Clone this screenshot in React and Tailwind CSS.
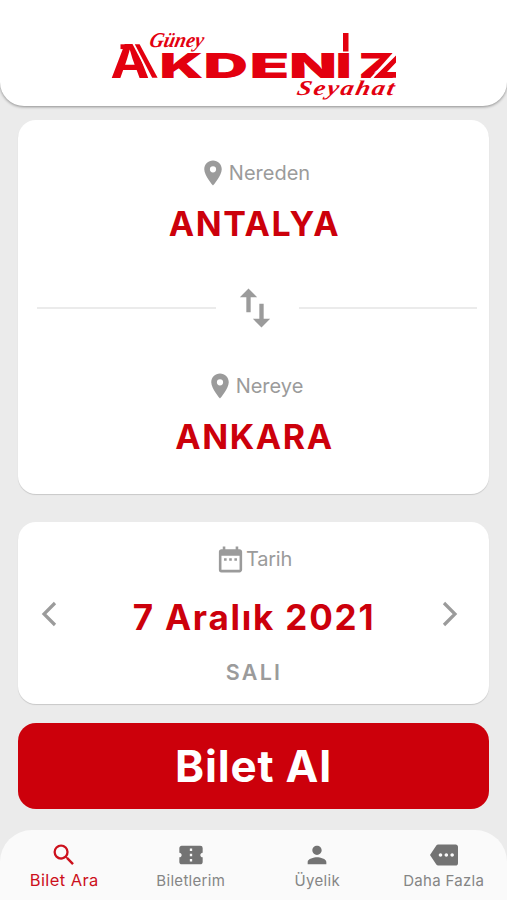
import {
  MdPlace,
  MdImportExport,
  MdDateRange,
  MdSearch,
  MdConfirmationNumber,
  MdPerson,
  MdMore,
} from "react-icons/md";

function Letter({ char, x, y = 77.7, width, size = 34.4 }) {
  return (
    <text
      x={x}
      y={y}
      fontSize={size}
      textLength={width}
      lengthAdjust="spacingAndGlyphs"
    >
      {char}
    </text>
  );
}

function Logo() {
  return (
    <svg
      className="h-[80px] w-[300px] fill-[#e3000f]"
      viewBox="105 25 300 80"
      aria-label="Güney Akdeniz Seyahat"
    >
      <g fontFamily="Inter, sans-serif" fontWeight="900">
        <g fontWeight="700">
          <Letter char="A" x={111.5} width={39} size={46} />
        </g>
        <Letter char="K" x={160.5} width={44} />
        <Letter char="D" x={204.5} width={44.5} />
        <Letter char="E" x={250.5} width={40} />
        <Letter char="N" x={290} width={48} />
        <Letter char="I" x={336.8} width={15.8} />
        <Letter char="Z" x={359.5} width={37} />
      </g>
      <path d="M121.5 44.300h12v4.800h-12z" />
      <path d="M133.5 44h2.800l18 34h-3z" className="fill-white" />
      <path d="M135.800 44.300h4.800l18 33.400h-5.400z" />
      <path d="M344 33h5.5v18.500H344z" />
      <path d="M394.500 52h5L374 79h-3.500z" className="fill-white" />
      <path d="M397 55.500v7l-9 9.500h9v5.700h-22.500z" />
      <g
        fontFamily="'Liberation Serif', serif"
        fontStyle="italic"
        fontWeight="700"
      >
        <text
          transform="translate(149.5 47) skewX(-12)"
          fontSize="21"
          textLength="54"
          lengthAdjust="spacingAndGlyphs"
        >
          Güney
        </text>
        <text
          transform="translate(297 95) skewX(-12)"
          fontSize="21"
          letterSpacing="1.5"
          textLength="99"
          lengthAdjust="spacingAndGlyphs"
        >
          Seyahat
        </text>
      </g>
    </svg>
  );
}

function Chevron({ d, className }) {
  return (
    <svg
      className={`h-[26px] w-[16px] fill-none stroke-[#9b9b9b] stroke-[3.2] ${className}`}
      viewBox="0 0 16 26"
    >
      <path d={d} />
    </svg>
  );
}

function Stop({ label, city, className }) {
  return (
    <div className={`flex flex-col items-center ${className}`}>
      <div className="flex h-[30px] items-center gap-px pl-px text-[#9b9b9b]">
        <MdPlace size={30} />
        <span className="text-[20px]">{label}</span>
      </div>
      <div className="mt-[16px] pl-[2px] text-[34px] leading-[40px] font-bold tracking-[1.6px] text-[#cc000b]">
        {city}
      </div>
    </div>
  );
}

function Tab({ icon: Icon, label, active }) {
  return (
    <div
      className={`flex flex-1 flex-col items-center pt-[11px] ${
        active ? "pl-px text-[#cc101c]" : "text-[#737373]"
      }`}
    >
      <Icon size={28} />
      <span
        className={
          active
            ? "text-[16.5px] leading-[22px] tracking-[0.4px]"
            : "mt-px text-[15px] leading-[22px] tracking-[0.3px] text-[#858585]"
        }
      >
        {label}
      </span>
    </div>
  );
}

export default function App() {
  return (
    <div className="flex h-[900px] w-[507px] flex-col overflow-hidden bg-[#ebebeb] font-['Inter',sans-serif]">
      <header className="flex h-[106px] shrink-0 justify-center rounded-b-[24px] bg-white pt-[25px] shadow-[0_1px_3px_rgba(0,0,0,0.4)]">
        <Logo />
      </header>

      <main className="flex flex-col px-[18px] pt-[14px]">
        <section className="h-[374px] rounded-[18px] bg-white shadow-[0_1px_1px_rgba(0,0,0,0.15)]">
          <Stop label="Nereden" city="ANTALYA" className="pt-[38px]" />
          <div className="mt-[38px] flex h-[52px] items-center pr-[12px] pl-[19px]">
            <div className="h-[2px] flex-1 bg-[#ebebeb]" />
            <div className="flex w-[83px] justify-center pr-[5px] text-[#9b9b9b]">
              <MdImportExport size={52} />
            </div>
            <div className="h-[2px] flex-1 bg-[#ebebeb]" />
          </div>
          <Stop label="Nereye" city="ANKARA" className="pt-[37px]" />
        </section>

        <section className="mt-[28px] flex h-[182px] items-center rounded-[18px] bg-white shadow-[0_1px_1px_rgba(0,0,0,0.15)]">
          <Chevron d="M14 2L3 13l11 11" className="mt-[2px] ml-[23px]" />
          <div className="flex flex-1 flex-col items-center pt-[2px]">
            <div className="flex h-[31px] items-center pl-[8px] text-[#9b9b9b]">
              <MdDateRange size={31} />
              <span className="text-[20px] tracking-[-0.2px]">Tarih</span>
            </div>
            <div className="mt-[22px] pl-[9px] text-[35px] leading-[40px] font-bold tracking-[1.8px] text-[#cc000b]">
              7 Aralık 2021
            </div>
            <div className="mt-[22px] pl-[9px] text-[21.5px] leading-[26px] font-semibold tracking-[2.2px] text-[#9b9b9b]">
              SALI
            </div>
          </div>
          <Chevron d="M2 2l11 11L2 24" className="mt-[2px] mr-[31px]" />
        </section>

        <button className="mt-[19px] h-[86px] rounded-[18px] bg-[#cc000b] text-[44px] font-bold tracking-[0.8px] text-white">
          Bilet Al
        </button>
      </main>

      <nav className="mt-[21px] flex h-[70px] shrink-0 rounded-t-[32px] bg-[#fafafa]">
        <Tab icon={MdSearch} label="Bilet Ara" active />
        <Tab icon={MdConfirmationNumber} label="Biletlerim" />
        <Tab icon={MdPerson} label="Üyelik" />
        <Tab icon={MdMore} label="Daha Fazla" />
      </nav>
    </div>
  );
}
